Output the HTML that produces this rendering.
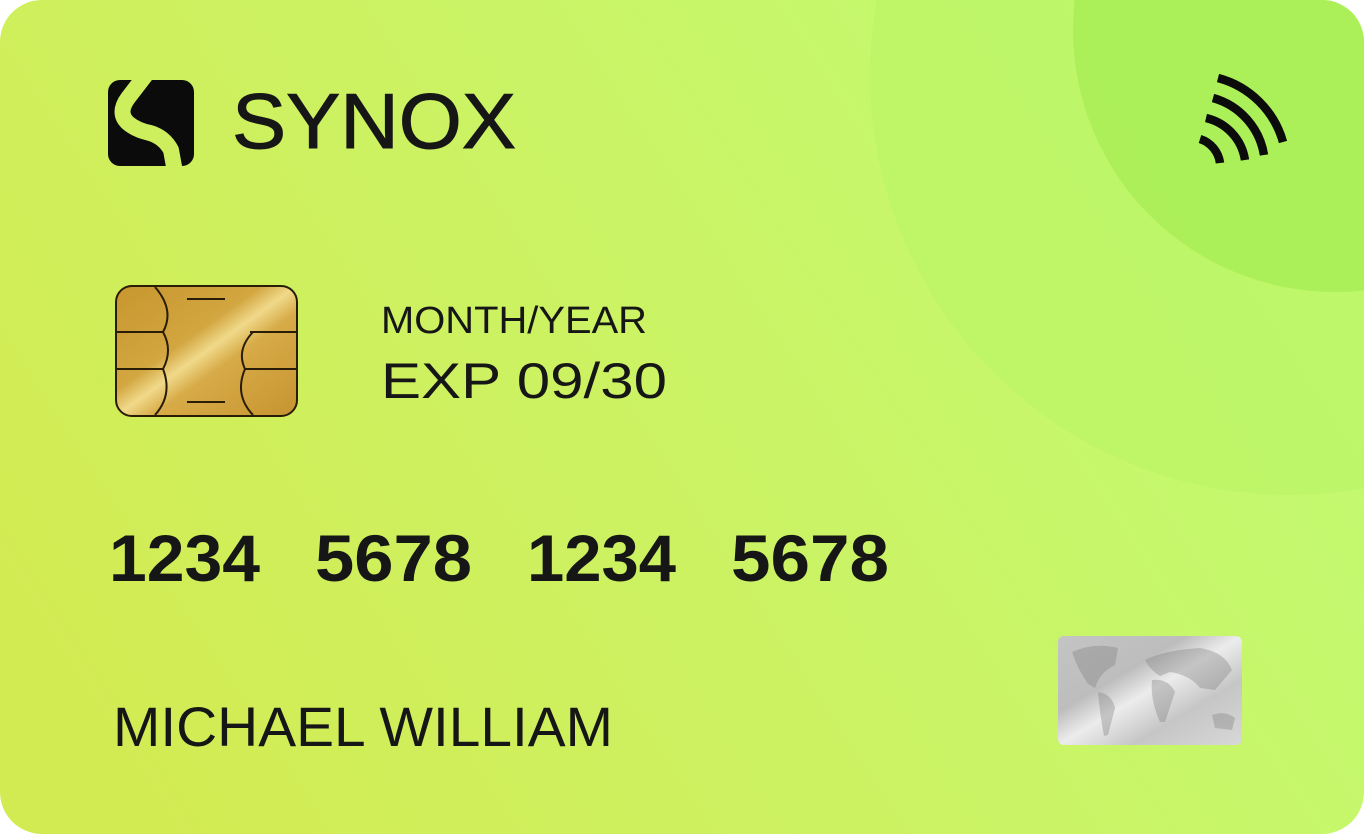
<!DOCTYPE html>
<html><head><meta charset="utf-8"><style>
html,body{margin:0;padding:0;background:#fff;width:1364px;height:834px;overflow:hidden}
svg{display:block}
text{font-family:"Liberation Sans",sans-serif;fill:#161616}
</style></head><body>
<svg width="1364" height="834" viewBox="0 0 1364 834" xmlns="http://www.w3.org/2000/svg">
<defs>
<linearGradient id="bg" x1="0" y1="0.7" x2="1" y2="0.3">
<stop offset="0" stop-color="#d3eb53"/>
<stop offset="0.5" stop-color="#cbf364"/>
<stop offset="1" stop-color="#c2fb72"/>
</linearGradient>
<linearGradient id="gold" x1="0" y1="0" x2="1" y2="1">
<stop offset="0" stop-color="#c8962e"/>
<stop offset="0.4" stop-color="#d2a640"/>
<stop offset="0.5" stop-color="#f0d98a"/>
<stop offset="0.6" stop-color="#d7ab48"/>
<stop offset="1" stop-color="#c69430"/>
</linearGradient>
<linearGradient id="silver" x1="0" y1="0" x2="1" y2="1">
<stop offset="0" stop-color="#c4c4c4"/>
<stop offset="0.35" stop-color="#bdbdbd"/>
<stop offset="0.5" stop-color="#ececec"/>
<stop offset="0.7" stop-color="#c6c6c6"/>
<stop offset="1" stop-color="#d8d8d8"/>
</linearGradient>
<clipPath id="card"><rect x="0" y="0" width="1364" height="834" rx="42"/></clipPath>
<clipPath id="logo"><rect x="108" y="80" width="86" height="86" rx="12"/></clipPath>
<clipPath id="holo"><rect x="1058" y="636" width="184" height="109" rx="6"/></clipPath>
</defs>
<g clip-path="url(#card)">
<rect width="1364" height="834" fill="url(#bg)"/>
<circle cx="1290" cy="75" r="420" fill="#bcf566" opacity="0.7"/>
<circle cx="1335" cy="30" r="262" fill="#a8ee55" opacity="0.8"/>
</g>
<!-- logo -->
<g clip-path="url(#logo)">
<rect x="108" y="80" width="86" height="86" fill="#0b0b0b"/>
<path d="M148,72 L128,98 Q117,113 128,123 Q136,130 150,133 Q164,137 171,150 L175,172" stroke="#cdee5d" stroke-width="16" fill="none" stroke-linejoin="round"/>
</g>
<text x="232" y="148" font-size="78" stroke="#161616" stroke-width="1" textLength="284" lengthAdjust="spacingAndGlyphs">SYNOX</text>
<!-- contactless -->
<g stroke="#0b0b0b" stroke-width="8.5" fill="none">
<path d="M1218,78 A92,92 0 0 1 1283,142"/>
<path d="M1213,98 A71,71 0 0 1 1264,155"/>
<path d="M1206,118 A51,51 0 0 1 1245,160"/>
<path d="M1200,139 A29,29 0 0 1 1220,163"/>
</g>
<!-- chip -->
<rect x="116" y="286" width="181" height="130" rx="16" fill="url(#gold)" stroke="#2a1d08" stroke-width="2"/>
<g stroke="#2a1d08" stroke-width="2" fill="none">
<path d="M155,287 Q175,310 163,332 Q173,350 163,369 Q173,395 155,415"/>
<line x1="116" y1="332" x2="163" y2="332"/>
<line x1="116" y1="369" x2="163" y2="369"/>
<path d="M253,332 Q236,350 245,369 Q234,395 253,415"/>
<line x1="250" y1="332" x2="297" y2="332"/>
<line x1="245" y1="369" x2="297" y2="369"/>
<line x1="187" y1="299" x2="225" y2="299"/>
<line x1="187" y1="402" x2="225" y2="402"/>
</g>
<text x="381" y="333" font-size="38" textLength="266" lengthAdjust="spacingAndGlyphs">MONTH/YEAR</text>
<text x="381" y="398" font-size="50" textLength="286" lengthAdjust="spacingAndGlyphs">EXP 09/30</text>
<g font-weight="bold" font-size="66">
<text x="109" y="581" textLength="151" lengthAdjust="spacingAndGlyphs">1234</text>
<text x="315" y="581" textLength="157" lengthAdjust="spacingAndGlyphs">5678</text>
<text x="527" y="581" textLength="149" lengthAdjust="spacingAndGlyphs">1234</text>
<text x="731" y="581" textLength="158" lengthAdjust="spacingAndGlyphs">5678</text>
</g>
<text x="113" y="746" font-size="56" textLength="500" lengthAdjust="spacingAndGlyphs">MICHAEL WILLIAM</text>
<!-- hologram -->
<g clip-path="url(#holo)">
<rect x="1058" y="636" width="184" height="109" fill="url(#silver)"/>
<g fill="#7d7d7d" opacity="0.35">
<path d="M1072,652 Q1095,642 1118,648 L1115,665 Q1100,672 1095,688 L1088,684 Q1078,670 1072,652Z"/>
<path d="M1098,692 Q1112,694 1115,708 L1108,735 L1104,736 Q1100,715 1098,692Z"/>
<path d="M1145,660 Q1165,650 1200,648 Q1225,652 1232,670 L1215,690 L1200,688 Q1190,675 1170,672 L1160,676 Q1150,670 1145,660Z"/>
<path d="M1152,680 Q1168,678 1175,692 L1165,722 L1160,722 Q1150,700 1152,680Z"/>
<path d="M1212,715 Q1225,710 1235,718 L1232,730 L1215,728Z"/>
</g>
</g>
</svg>
</body></html>
